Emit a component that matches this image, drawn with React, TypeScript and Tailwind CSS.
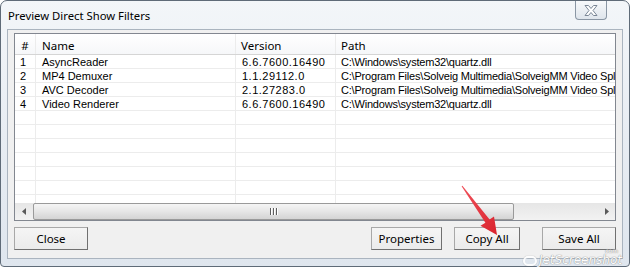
import type { ReactNode } from "react";

type Filter = {
  id: number;
  name: string;
  version: string;
  path: string;
};

const FILTERS: Filter[] = [
  { id: 1, name: "AsyncReader", version: "6.6.7600.16490", path: "C:\\Windows\\system32\\quartz.dll" },
  { id: 2, name: "MP4 Demuxer", version: "1.1.29112.0", path: "C:\\Program Files\\Solveig Multimedia\\SolveigMM Video Spl" },
  { id: 3, name: "AVC Decoder", version: "2.1.27283.0", path: "C:\\Program Files\\Solveig Multimedia\\SolveigMM Video Spl" },
  { id: 4, name: "Video Renderer", version: "6.6.7600.16490", path: "C:\\Windows\\system32\\quartz.dll" },
];

const EMPTY_ROWS = 7;

function Cell({ w, children, className = "" }: { w: string; children?: ReactNode; className?: string }) {
  return (
    <div className={`${w} shrink-0 h-full border-r border-[#ececec] whitespace-nowrap overflow-hidden ${className}`}>
      {children}
    </div>
  );
}

function DlgButton({ label, w }: { label: string; w: string }) {
  return (
    <button
      className={`${w} h-[23px] border border-[#a8a8a8] border-r-[#707070] border-b-[#707070] bg-gradient-to-b from-[#f5f5f5] to-[#ebebeb] text-[11.5px] text-black flex items-center justify-center`}
    >
      {label}
    </button>
  );
}

export default function App() {
  return (
    <div className="relative w-[630px] h-[267px] overflow-hidden bg-white font-['Noto_Sans','Open_Sans',sans-serif]">
      <div className="h-full flex flex-col rounded-t-[7px] rounded-b-[4px] border border-[#5f6b78] bg-gradient-to-b from-[#f3f6f9] via-[#e8edf3] to-[#dfe6ee] px-[6px] pb-[7px]">
        {/* title bar */}
        <div className="h-[28px] shrink-0 flex items-start">
          <span className="pl-[1px] pt-[7px] text-[11.3px] leading-[16px] text-black">Preview Direct Show Filters</span>
          <div className="ml-auto mr-[16px] w-[32px] h-[19px] rounded-b-[4px] border border-t-0 border-[#8a96a4] bg-gradient-to-b from-[#f7f9fb] to-[#dfe5ec] flex items-center justify-center">
            <svg width="14" height="11" viewBox="0 0 14 11">
              <path
                d="M1 0.5h3.5L7 3.5L9.5 0.5H13L9 5.5L13 10.5H9.5L7 7.5L4.5 10.5H1L5 5.5Z"
                fill="#ffffff"
                stroke="#7b8796"
                strokeWidth="1"
                strokeLinejoin="round"
              />
            </svg>
          </div>
        </div>

        {/* client area */}
        <div className="flex-1 flex flex-col border border-[#aab4bf] bg-[#f0f0f0] px-[6px] pt-[3px] pb-[8px]">
          <div className="h-[188px] shrink-0 flex flex-col border border-[#828790] bg-white overflow-hidden font-['Liberation_Sans',sans-serif] text-[11px] text-black">
            {/* header */}
            <div className="h-[21px] shrink-0 flex overflow-hidden border-b border-[#d5d5d5] bg-gradient-to-b from-white to-[#f6f7f9] leading-[23px] text-[11.5px] font-['Noto_Sans',sans-serif]">
              <Cell w="w-[21px]" className="text-center border-[#d5d5d5]">
                #
              </Cell>
              <Cell w="w-[200px]" className="pl-[6px] border-[#d5d5d5]">
                Name
              </Cell>
              <Cell w="w-[100px]" className="pl-[5px] border-[#d5d5d5]">
                Version
              </Cell>
              <div className="flex-1 pl-[5px]">Path</div>
            </div>

            {/* rows */}
            <div className="flex-1 overflow-hidden">
              {FILTERS.map((f) => (
                <div key={f.id} className="h-[14px] flex border-b border-[#ececec] leading-[15px]">
                  <Cell w="w-[21px]" className="pl-[5px]">
                    {f.id}
                  </Cell>
                  <Cell w="w-[200px]" className="pl-[6px]">
                    {f.name}
                  </Cell>
                  <Cell w="w-[100px]" className="pl-[6px] tracking-[0.5px]">
                    {f.version}
                  </Cell>
                  <div className="flex-1 pl-[5px] whitespace-nowrap tracking-[-0.2px]">{f.path}</div>
                </div>
              ))}
              {Array.from({ length: EMPTY_ROWS }).map((_, i) => (
                <div key={i} className="h-[14px] flex border-b border-[#ececec]">
                  <Cell w="w-[21px]" />
                  <Cell w="w-[200px]" />
                  <Cell w="w-[100px]" />
                  <div className="flex-1" />
                </div>
              ))}
            </div>

            {/* horizontal scrollbar */}
            <div className="h-[17px] shrink-0 flex bg-gradient-to-b from-[#e6e6e6] to-[#f2f2f2]">
              <div className="w-[17px] flex items-center justify-center">
                <svg width="4" height="7" viewBox="0 0 4 7">
                  <path d="M4 0L0 3.5L4 7Z" fill="#5a5a5a" />
                </svg>
              </div>
              <div className="ml-[1px] w-[481px] h-full rounded-[2px] border border-[#9a9a9a] bg-gradient-to-b from-[#f5f5f5] via-[#e6e6e6] to-[#d4d4d4] flex items-center justify-center">
                <div className="flex gap-[1px]">
                  <span className="w-[2px] h-[7px] bg-[#5e5e5e] border-r border-white" />
                  <span className="w-[2px] h-[7px] bg-[#5e5e5e] border-r border-white" />
                  <span className="w-[2px] h-[7px] bg-[#5e5e5e] border-r border-white" />
                </div>
              </div>
              <div className="flex-1" />
              <div className="w-[17px] flex items-center justify-center">
                <svg width="4" height="7" viewBox="0 0 4 7">
                  <path d="M0 0L4 3.5L0 7Z" fill="#5a5a5a" />
                </svg>
              </div>
            </div>
          </div>

          {/* buttons */}
          <div className="mt-[6px] flex">
            <DlgButton label="Close" w="w-[74px]" />
            <div className="ml-auto flex gap-[12px] mr-[22px]">
              <DlgButton label="Properties" w="w-[71px]" />
              <DlgButton label="Copy All" w="w-[66px]" />
            </div>
            <DlgButton label="Save All" w="w-[74px]" />
          </div>
        </div>
      </div>

      {/* annotation arrow */}
      <svg className="absolute left-0 top-0 pointer-events-none" width="630" height="267">
        <defs>
          <linearGradient id="arr" x1="0" y1="0" x2="1" y2="1">
            <stop offset="0" stopColor="#f0505a" />
            <stop offset="1" stopColor="#d9232d" />
          </linearGradient>
        </defs>
        <polygon
          points="461.6,186.3 462.4,185.7 489.6,219.6 494,216.5 497,235 480.5,225.7 485.4,222.8"
          fill="url(#arr)"
        />
      </svg>

      {/* watermark */}
      <div className="absolute right-[8px] bottom-[1px] flex items-end gap-[2px] italic text-[12px] leading-[12px] text-white font-['DejaVu_Sans',sans-serif] [text-shadow:0_0_1px_#8a8a8a,0_0_1px_#8a8a8a] opacity-90">
        <span className="w-[14px] h-[10px] rounded-full border-2 border-white shadow-[0_0_1px_#8a8a8a]" />
        <span>JetScreenshot</span>
        <span className="absolute right-[4px] -top-[6px] text-[6px] leading-[6px] not-italic">com</span>
      </div>
    </div>
  );
}
